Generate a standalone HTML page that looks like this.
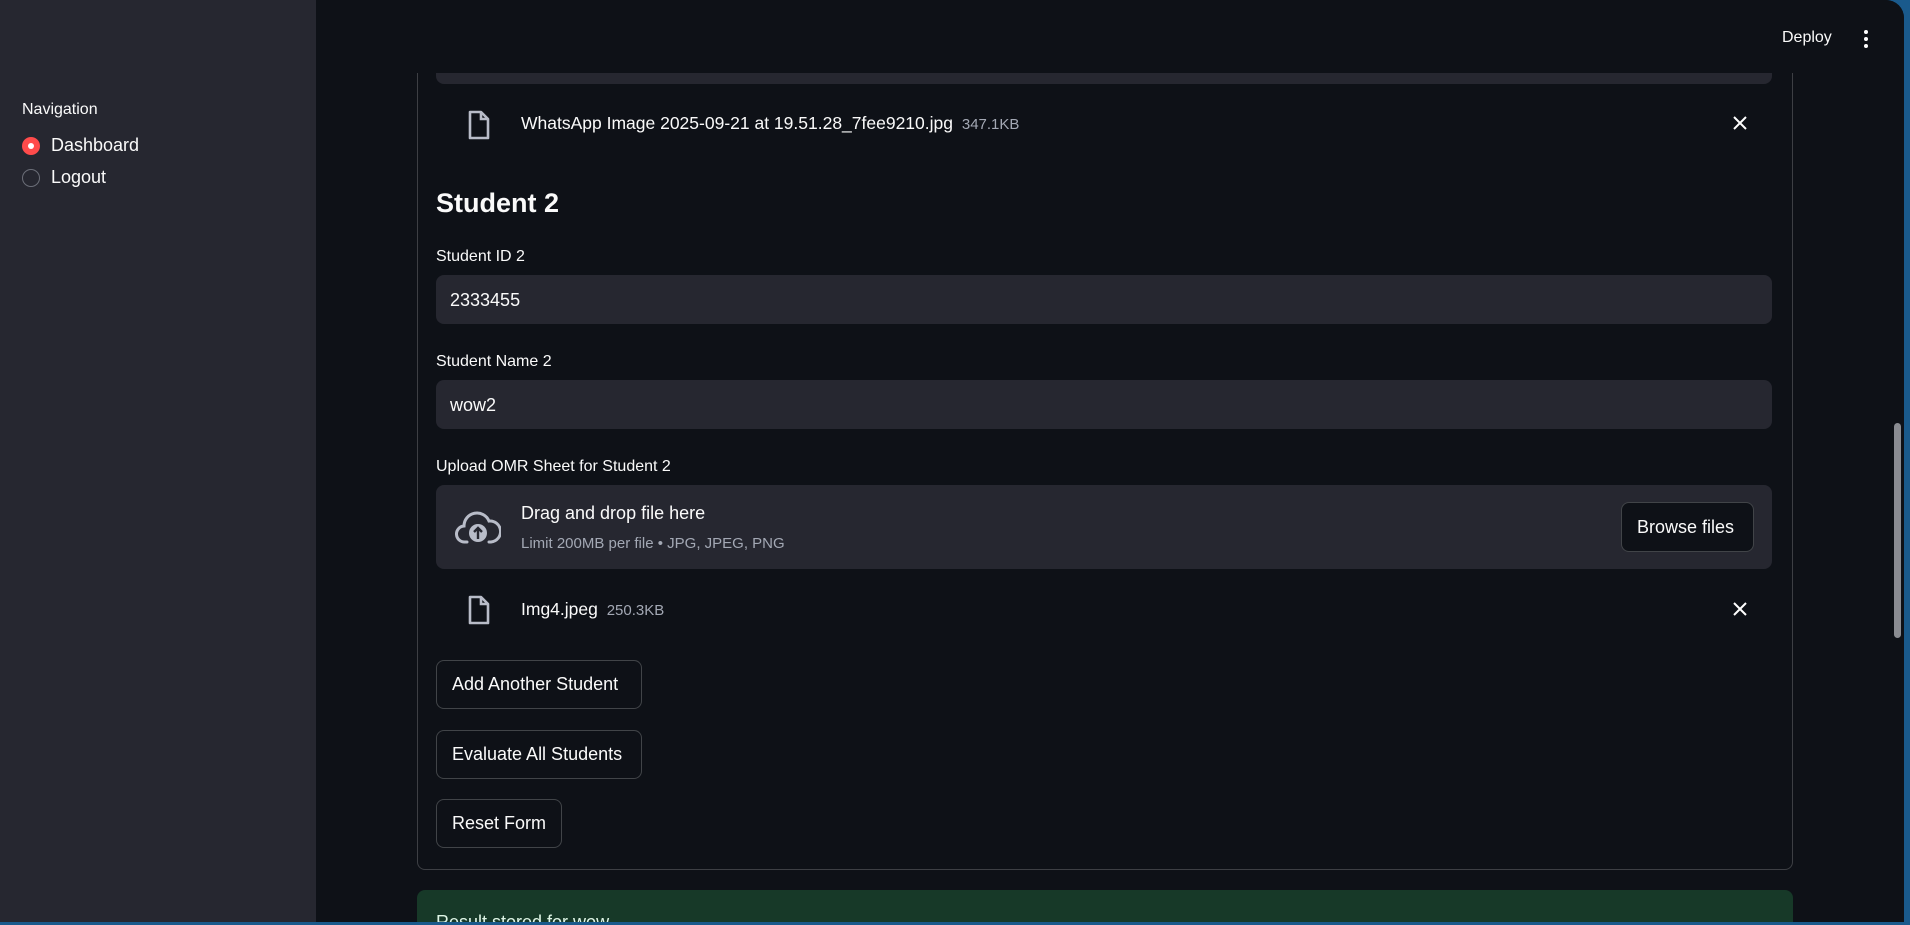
<!DOCTYPE html>
<html><head><meta charset="utf-8"><style>
*{box-sizing:border-box;margin:0;padding:0}
body{width:1910px;height:925px;overflow:hidden;background:#1a5a8c;font-family:"Liberation Sans",sans-serif;color:#fafafa;position:relative}
#app{position:absolute;left:0;top:0;width:1904px;height:922px;background:#0e1117;border-top-right-radius:18px;overflow:hidden}
#side{position:absolute;left:0;top:0;width:316px;height:100%;background:#262730;z-index:3}
.t{position:absolute;white-space:nowrap}
.lbl{font-size:16px}
.inp{position:absolute;left:436px;width:1336px;height:49px;background:#262730;border-radius:8px;font-size:18px;padding:15px 14px}
.btn{position:absolute;left:436px;height:49px;border:1px solid rgba(250,250,250,0.22);border-radius:8px;background:#0e1117;font-size:18px;padding:0 15px;line-height:47px;white-space:nowrap}
.sub{color:#a3a8b4}
</style></head><body>
<div id="app">
<div id="side">
 <div class="t" style="left:22px;top:101px;font-size:16px">Navigation</div>
 <div style="position:absolute;left:22px;top:137px;width:18px;height:18px;border-radius:50%;background:#ff4b4b"><div style="position:absolute;left:6px;top:6px;width:6px;height:6px;border-radius:50%;background:#fff"></div></div>
 <div class="t" style="left:51px;top:135px;font-size:18px">Dashboard</div>
 <div style="position:absolute;left:22px;top:169px;width:18px;height:18px;border-radius:50%;border:1px solid #6b6e78"></div>
 <div class="t" style="left:51px;top:167px;font-size:18px">Logout</div>
</div>
<!-- container -->
<div style="position:absolute;left:417px;top:40px;width:1376px;height:830px;border:1px solid rgba(250,250,250,0.2);border-radius:8px"></div>
<div style="position:absolute;left:436px;top:40px;width:1336px;height:44px;background:#262730;border-radius:0 0 8px 8px"></div>
<div style="position:absolute;left:316px;top:0;width:1588px;height:73px;background:#0e1117;z-index:2"></div>
<div class="t" style="left:1782px;top:29px;font-size:16px;z-index:4">Deploy</div>
<div style="position:absolute;left:1864px;top:30px;width:4px;z-index:4">
 <div style="width:4px;height:4px;border-radius:2px;background:#fff;margin-bottom:3px"></div>
 <div style="width:4px;height:4px;border-radius:2px;background:#fff;margin-bottom:3px"></div>
 <div style="width:4px;height:4px;border-radius:2px;background:#fff"></div>
</div>
<!-- file 1 -->
<svg style="position:absolute;left:467px;top:110px" width="24" height="30" viewBox="0 0 24 30"><path d="M3 2h11l7 7v19H3z" fill="none" stroke="#b8bcc8" stroke-width="2.6" stroke-linejoin="round"/><path d="M14 2v7h7" fill="none" stroke="#b8bcc8" stroke-width="2.6"/></svg>
<div class="t" style="left:521px;top:113px;font-size:17.5px">WhatsApp Image 2025-09-21 at 19.51.28_7fee9210.jpg <span class="sub" style="font-size:15px;margin-left:4px">347.1KB</span></div>
<svg style="position:absolute;left:1732px;top:115px" width="16" height="16"><path d="M2 2L14 14M14 2L2 14" stroke="#fff" stroke-width="2"/></svg>
<div class="t" style="left:436px;top:188px;font-size:27px;font-weight:bold">Student 2</div>
<div class="t lbl" style="left:436px;top:248px">Student ID 2</div>
<div class="inp" style="top:275px">2333455</div>
<div class="t lbl" style="left:436px;top:353px">Student Name 2</div>
<div class="inp" style="top:380px">wow2</div>
<div class="t lbl" style="left:436px;top:458px">Upload OMR Sheet for Student 2</div>
<div style="position:absolute;left:436px;top:485px;width:1336px;height:84px;background:#262730;border-radius:8px"></div>
<svg style="position:absolute;left:455px;top:508px" width="46" height="38" viewBox="0 0 46 38"><path d="M12 34H10A8 8 0 0 1 9 18 A13 13 0 0 1 34 13 A10 10 0 0 1 36 34H34" fill="none" stroke="#b8bcc8" stroke-width="3" stroke-linecap="round"/><circle cx="23" cy="25" r="9" fill="#b8bcc8"/><path d="M23 31V20M19 24l4-4 4 4" fill="none" stroke="#262730" stroke-width="2.4"/></svg>
<div class="t" style="left:521px;top:503px;font-size:18px">Drag and drop file here</div>
<div class="t sub" style="left:521px;top:535px;font-size:15px">Limit 200MB per file • JPG, JPEG, PNG</div>
<div class="btn" style="left:1621px;top:502px;height:50px;width:133px;line-height:48px">Browse files</div>
<svg style="position:absolute;left:467px;top:595px" width="24" height="30" viewBox="0 0 24 30"><path d="M3 2h11l7 7v19H3z" fill="none" stroke="#b8bcc8" stroke-width="2.6" stroke-linejoin="round"/><path d="M14 2v7h7" fill="none" stroke="#b8bcc8" stroke-width="2.6"/></svg>
<div class="t" style="left:521px;top:599px;font-size:17.5px">Img4.jpeg <span class="sub" style="font-size:15px;margin-left:4px">250.3KB</span></div>
<svg style="position:absolute;left:1732px;top:601px" width="16" height="16"><path d="M2 2L14 14M14 2L2 14" stroke="#fff" stroke-width="2"/></svg>
<div class="btn" style="top:660px;width:206px">Add Another Student</div>
<div class="btn" style="top:730px;width:206px">Evaluate All Students</div>
<div class="btn" style="top:799px;width:126px">Reset Form</div>
<div style="position:absolute;left:417px;top:890px;width:1376px;height:60px;background:#173928;border-radius:8px"></div>
<div class="t" style="left:436px;top:912px;font-size:18px;color:#dff5e6">Result stored for wow</div>
<div style="position:absolute;left:1894px;top:423px;width:7px;height:215px;background:#8a8c92;border-radius:4px;z-index:5"></div>
</div>
</body></html>
